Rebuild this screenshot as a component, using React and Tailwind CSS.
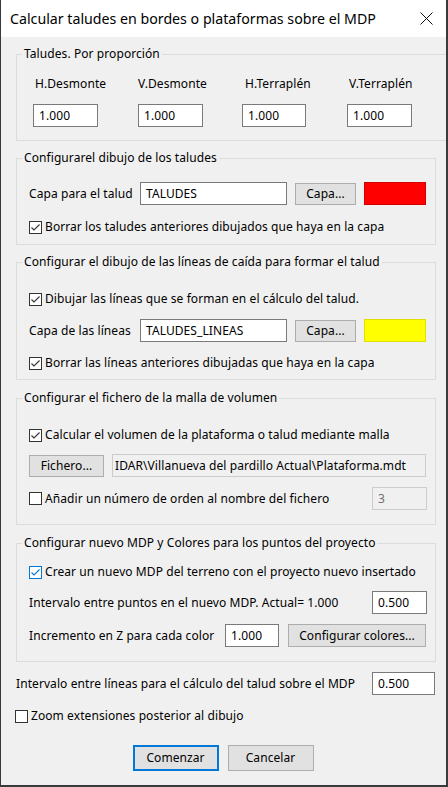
import React from "react";

const Check = ({ checked, blue }) => (
  <span
    className={`w-[13px] h-[13px] shrink-0 bg-white border flex items-center justify-center ${
      blue ? "border-[#0078d7]" : "border-[#333333]"
    }`}
  >
    {checked && (
      <svg width="11" height="11" viewBox="0 0 11 11">
        <path
          d="M1.5 5.5 L4 8 L9.5 2.5"
          fill="none"
          stroke={blue ? "#0078d7" : "#333333"}
          strokeWidth="1.1"
        />
      </svg>
    )}
  </span>
);

const CheckRow = ({ checked, blue, children, className = "" }) => (
  <div className={`flex items-center h-[16px] ${className}`}>
    <Check checked={checked} blue={blue} />
    <span className="ml-[3px] whitespace-nowrap">{children}</span>
  </div>
);

const Field = ({ value, className = "" }) => (
  <div
    className={`h-[23px] shrink-0 border border-[#7a7a7a] bg-white pl-[5px] flex items-center whitespace-nowrap overflow-hidden ${className}`}
  >
    {value}
  </div>
);

const Btn = ({ children, className = "" }) => (
  <div
    className={`h-[22px] shrink-0 border border-[#adadad] bg-[#e1e1e1] flex items-center justify-center ${className}`}
  >
    {children}
  </div>
);

const Group = ({ title, className = "", children }) => (
  <fieldset
    className={`w-[420px] ml-[15px] border border-[#dcdcdc] ${className}`}
  >
    <legend className="ml-[5px] px-[2px] leading-[16px]">{title}</legend>
    {children}
  </fieldset>
);

export default function App() {
  return (
    <div className="w-[448px] h-[787px] bg-[#f0f0f0] border-l border-r-2 border-b-2 border-[#3a3a3a] text-[12px] leading-[16px] tracking-[0.08px] text-black font-['Noto_Sans',sans-serif] overflow-hidden">
      {/* Title bar */}
      <div className="h-[37px] bg-white flex items-center justify-between pl-[9px] pr-[13px]">
        <span className="text-[14.2px] tracking-normal">
          Calcular taludes en bordes o plataformas sobre el MDP
        </span>
        <svg width="13" height="13" viewBox="0 0 13 13">
          <path d="M0.5 0.5 L12.5 12.5 M12.5 0.5 L0.5 12.5" stroke="#111" strokeWidth="1" />
        </svg>
      </div>

      {/* Taludes por proporción */}
      <Group title="Taludes. Por proporción" className="mt-[9px] pb-[13px]">
        <div className="grid grid-cols-[105px_105px_105px_105px] pl-[16px] mt-[14px]">
          <span className="pl-[2px]">H.Desmonte</span>
          <span>V.Desmonte</span>
          <span className="pl-[2px]">H.Terraplén</span>
          <span className="pl-[1px]">V.Terraplén</span>
        </div>
        <div className="grid grid-cols-[105px_105px_105px_105px] pl-[16px] mt-[12px]">
          <Field value="1.000" className="w-[65px]" />
          <Field value="1.000" className="w-[65px]" />
          <Field value="1.000" className="w-[64px] -ml-px" />
          <Field value="1.000" className="w-[65px] -ml-px" />
        </div>
      </Group>

      {/* Dibujo de los taludes */}
      <Group title="Configurarel dibujo de los taludes" className="mt-[9px] pb-[9px]">
        <div className="flex items-center pl-[12px] mt-[16px]">
          <span className="w-[111px]">Capa para el talud</span>
          <Field value="TALUDES" className="w-[147px]" />
          <Btn className="w-[61px] ml-[8px]">Capa...</Btn>
          <div className="w-[62px] h-[23px] ml-[8px] bg-[#ff0000] border border-[#d00000]" />
        </div>
        <CheckRow checked className="pl-[12px] mt-[14px]">
          Borrar los taludes anteriores dibujados que haya en la capa
        </CheckRow>
      </Group>

      {/* Líneas de caída */}
      <Group
        title="Configurar el dibujo de las líneas de caída para formar el talud"
        className="mt-[9px] pb-[8px]"
      >
        <CheckRow checked className="pl-[12px] mt-[21px]">
          Dibujar las líneas que se forman en el cálculo del talud.
        </CheckRow>
        <div className="flex items-center pl-[12px] mt-[12px]">
          <span className="w-[111px]">Capa de las líneas</span>
          <Field value="TALUDES_LINEAS" className="w-[147px]" />
          <Btn className="w-[61px] ml-[8px]">Capa...</Btn>
          <div className="w-[62px] h-[23px] ml-[8px] bg-[#ffff00] border border-[#e0e000]" />
        </div>
        <CheckRow checked className="pl-[12px] mt-[13px]">
          Borrar las líneas anteriores dibujadas que haya en la capa
        </CheckRow>
      </Group>

      {/* Malla de volumen */}
      <Group title="Configurar el fichero de la malla de volumen" className="mt-[10px] pb-[14px]">
        <CheckRow checked className="pl-[12px] mt-[21px]">
          Calcular el volumen de la plataforma o talud mediante malla
        </CheckRow>
        <div className="flex items-center pl-[12px] mt-[11px]">
          <Btn className="w-[75px]">Fichero...</Btn>
          <div className="w-[314px] h-[23px] ml-[8px] border border-[#cccccc] bg-[#f0f0f0] pl-[2px] flex items-center whitespace-nowrap overflow-hidden">
            IDAR\Villanueva del pardillo Actual\Plataforma.mdt
          </div>
        </div>
        <div className="flex items-center justify-between pl-[12px] pr-[8px] mt-[10px]">
          <CheckRow checked={false}>
            Añadir un número de orden al nombre del fichero
          </CheckRow>
          <div className="w-[55px] h-[23px] border border-[#cccccc] bg-[#f0f0f0] pl-[5px] flex items-center text-[#6d6d6d]">
            3
          </div>
        </div>
      </Group>

      {/* Nuevo MDP */}
      <Group
        title="Configurar nuevo MDP y Colores para los puntos del proyecto"
        className="mt-[10px] pb-[14px]"
      >
        <CheckRow checked blue className="pl-[12px] mt-[13px]">
          Crear un nuevo MDP del terreno con el proyecto nuevo insertado
        </CheckRow>
        <div className="flex items-center justify-between pl-[12px] pr-[8px] mt-[11px]">
          <span>Intervalo entre puntos en el nuevo MDP. Actual= 1.000</span>
          <Field value="0.500" className="w-[55px]" />
        </div>
        <div className="flex items-center pl-[12px] mt-[10px]">
          <span className="w-[196px]">Incremento en Z para cada color</span>
          <Field value="1.000" className="w-[54px]" />
          <Btn className="w-[138px] h-[23px] ml-[9px]">Configurar colores...</Btn>
        </div>
      </Group>

      {/* Intervalo líneas */}
      <div className="flex items-center justify-between pl-[15px] pr-[11px] mt-[10px]">
        <span>Intervalo entre líneas para el cálculo del talud sobre el MDP</span>
        <Field value="0.500" className="w-[63px]" />
      </div>
      <CheckRow checked={false} className="pl-[14px] mt-[13px]">
        Zoom extensiones posterior al dibujo
      </CheckRow>

      {/* Botones */}
      <div className="flex justify-center gap-[9px] mt-[21px] pr-[1px]">
        <div className="w-[86px] h-[26px] border-2 border-[#0078d7] bg-[#e1e1e1] flex items-center justify-center">
          Comenzar
        </div>
        <div className="w-[86px] h-[26px] border border-[#adadad] bg-[#e1e1e1] flex items-center justify-center">
          Cancelar
        </div>
      </div>
    </div>
  );
}
